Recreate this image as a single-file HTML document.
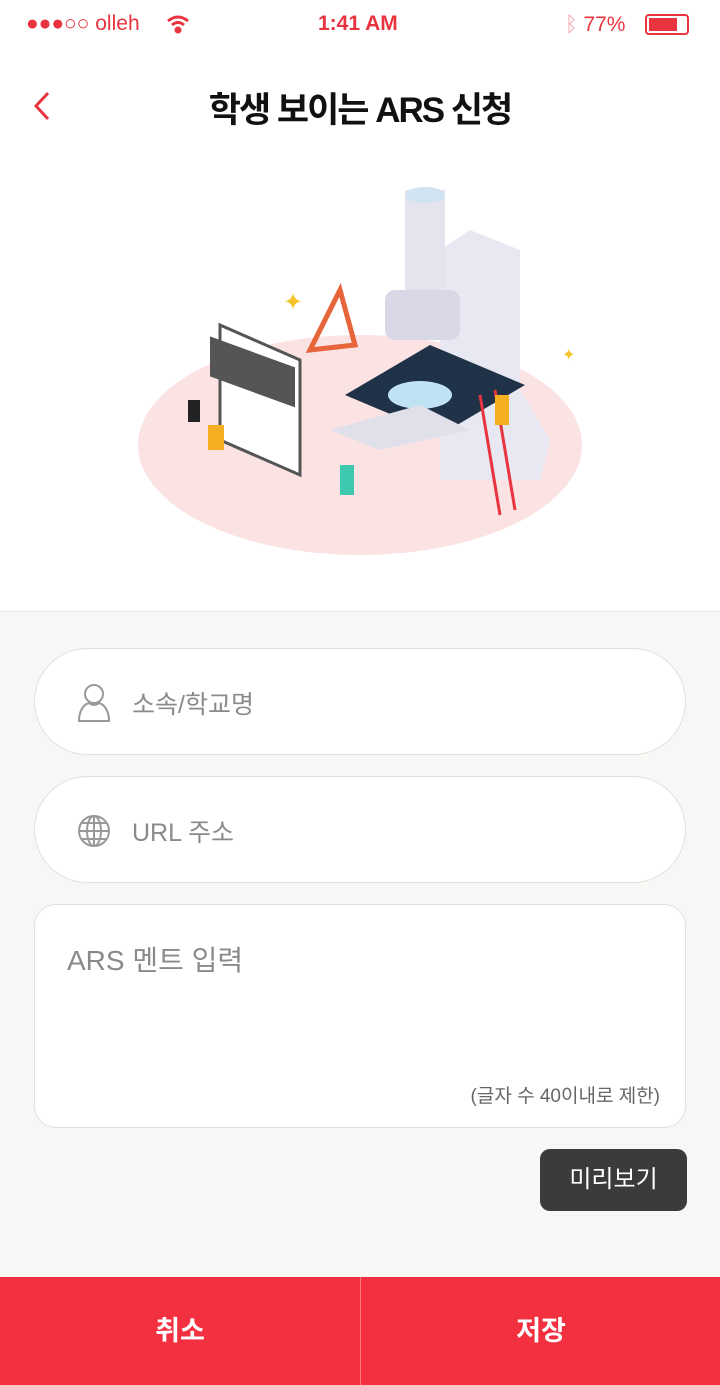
<!DOCTYPE html>
<html><head><meta charset="utf-8"><style>
*{margin:0;padding:0;box-sizing:border-box}
body{width:720px;height:1385px;position:relative;background:#f8f7f5;font-family:"Liberation Sans","Noto Sans CJK KR",sans-serif;overflow:hidden}
.top{position:absolute;left:0;top:0;width:720px;height:612px;background:#fff;border-bottom:1px solid #e8e6e3}
.sb{position:absolute;top:12px;font-size:21px;color:#e8343f}
.title{position:absolute;top:82px;left:0;width:720px;text-align:center;font-size:35px;font-weight:bold;color:#111;letter-spacing:-2px}
.field{position:absolute;left:34px;width:652px;background:#fff;border:1px solid #e2e0dd;border-radius:54px}
.ph{position:absolute;font-size:25px;color:#8a8a8a}
.btn{position:absolute;top:1277px;height:108px;width:360px;background:#f2303f;color:#fff;font-size:27px;font-weight:bold;text-align:center;line-height:108px}
</style></head><body>
<div class="top">
<div class="sb" style="left:26px">●●●○○ olleh</div>
<svg style="position:absolute;left:166px;top:14px" width="24" height="20" fill="none" stroke="#e8343f" stroke-width="3"><path d="M2 7Q12 -1 22 7M6 11Q12 6 18 11"/><circle cx="12" cy="16" r="2" fill="#e8343f"/></svg>
<div class="sb" style="left:318px;font-weight:bold">1:41 AM</div>
<div class="sb" style="left:565px;top:13px"><span style="color:#f4a0a6">ᛒ</span> 77%</div>
<div style="position:absolute;left:645px;top:14px;width:44px;height:21px;border:2px solid #e8343f;border-radius:4px"><div style="margin:2px;width:28px;height:13px;background:#e8343f"></div></div>
<svg style="position:absolute;left:30px;top:90px" width="24" height="32"><path d="M18 3L6 16l12 13" stroke="#e8343f" stroke-width="3" fill="none"/></svg>
<div class="title">학생 보이는 ARS 신청</div>
<svg style="position:absolute;left:0;top:150px" width="720" height="460">
<ellipse cx="360" cy="295" rx="222" ry="110" fill="#fbe3e3"/>
<polygon points="220,175 300,210 300,325 220,290" fill="#fff" stroke="#555" stroke-width="3"/>
<rect x="210" y="190" width="85" height="40" fill="#555" transform="skewY(20) translate(0,-80)"/>
<path d="M410 330 L540 330 L550 290 L520 240 L520 100 L470 80 L440 100 L440 330Z" fill="#e8e8f2"/>
<rect x="405" y="40" width="40" height="140" fill="#e4e4ee"/>
<ellipse cx="425" cy="45" rx="20" ry="8" fill="#cfe3f0"/>
<rect x="385" y="140" width="75" height="50" rx="10" fill="#d8d8e6"/>
<polygon points="345,245 430,195 525,235 440,285" fill="#1f3248"/>
<ellipse cx="420" cy="245" rx="32" ry="14" fill="#bfe3f2"/>
<polygon points="330,280 420,255 470,280 380,300" fill="#e0e0ea"/>
<path d="M310 200 L340 140 L355 195Z" fill="none" stroke="#e8643a" stroke-width="5"/>
<line x1="495" y1="240" x2="515" y2="360" stroke="#e8343f" stroke-width="3"/>
<line x1="480" y1="245" x2="500" y2="365" stroke="#e8343f" stroke-width="3"/>
<rect x="208" y="275" width="16" height="25" fill="#f5b021"/><rect x="340" y="315" width="14" height="30" fill="#3cc9b0"/><rect x="495" y="245" width="14" height="30" fill="#f5b021"/><rect x="188" y="250" width="12" height="22" fill="#222"/>
<text x="283" y="160" font-size="24" fill="#f5c32a">✦</text><text x="562" y="210" font-size="16" fill="#f5c32a">✦</text>
</svg>
</div>
<div class="field" style="top:648px;height:107px"><svg style="position:absolute;left:42px;top:34px" width="34" height="40" fill="none" stroke="#999" stroke-width="2"><circle cx="17" cy="11" r="9"/><path d="M2 38 C2 26 8 21 12 20 Q17 24 22 20 C26 21 32 26 32 38Z"/></svg><div class="ph" style="left:97px;top:36px">소속/학교명</div></div>
<div class="field" style="top:776px;height:107px"><svg style="position:absolute;left:42px;top:37px" width="34" height="34" fill="none" stroke="#999" stroke-width="2"><circle cx="17" cy="17" r="15"/><ellipse cx="17" cy="17" rx="7" ry="15"/><path d="M2 17H32M5 9H29M5 25H29M17 2V32"/></svg><div class="ph" style="left:97px;top:36px">URL 주소</div></div>
<div class="field" style="top:904px;height:224px;border-radius:22px"><div class="ph" style="left:32px;top:34px;font-size:28px">ARS 멘트 입력</div><div style="position:absolute;right:25px;top:176px;font-size:19px;color:#666">(글자 수 40이내로 제한)</div></div>
<div style="position:absolute;left:540px;top:1149px;width:147px;height:62px;background:#3b3b3b;border-radius:10px;color:#fff;font-size:24px;text-align:center;line-height:62px">미리보기</div>
<div class="btn" style="left:0">취소</div>
<div class="btn" style="left:361px">저장</div>
<div style="position:absolute;left:360px;top:1277px;width:1px;height:108px;background:#f77"></div>
</body></html>
